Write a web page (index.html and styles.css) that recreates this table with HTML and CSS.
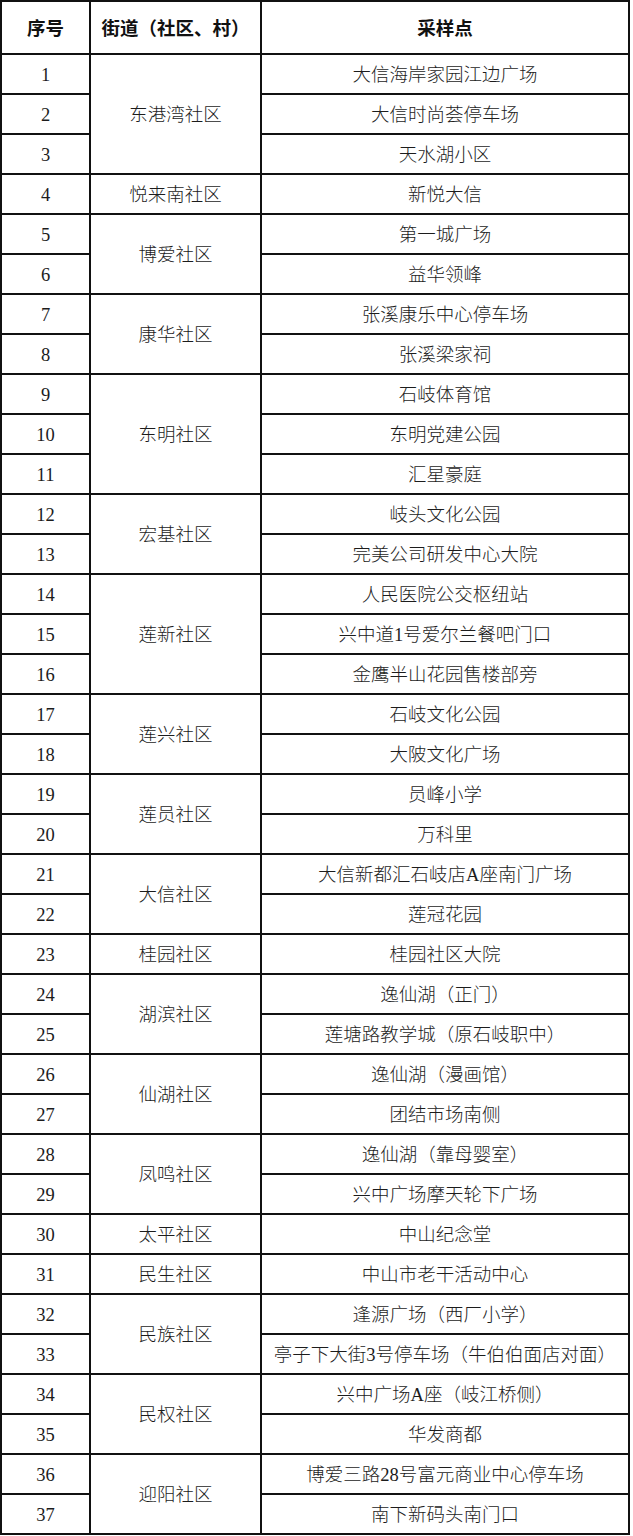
FILE: index.html
```html
<!DOCTYPE html>
<html lang="zh">
<head>
<meta charset="utf-8">
<title>采样点</title>
<link rel="stylesheet" href="styles.css">
</head>
<body>
<table class="grid">
<colgroup><col class="c1"><col class="c2"><col class="c3"></colgroup>
<thead>
<tr class="head"><th>序号</th><th>街道（社区、村）</th><th>采样点</th></tr>
</thead>
<tbody>
<tr><td>1</td><td rowspan="3">东港湾社区</td><td>大信海岸家园江边广场</td></tr>
<tr><td>2</td><td>大信时尚荟停车场</td></tr>
<tr><td>3</td><td>天水湖小区</td></tr>
<tr><td>4</td><td>悦来南社区</td><td>新悦大信</td></tr>
<tr><td>5</td><td rowspan="2">博爱社区</td><td>第一城广场</td></tr>
<tr><td>6</td><td>益华领峰</td></tr>
<tr><td>7</td><td rowspan="2">康华社区</td><td>张溪康乐中心停车场</td></tr>
<tr><td>8</td><td>张溪梁家祠</td></tr>
<tr><td>9</td><td rowspan="3">东明社区</td><td>石岐体育馆</td></tr>
<tr><td>10</td><td>东明党建公园</td></tr>
<tr><td>11</td><td>汇星豪庭</td></tr>
<tr><td>12</td><td rowspan="2">宏基社区</td><td>岐头文化公园</td></tr>
<tr><td>13</td><td>完美公司研发中心大院</td></tr>
<tr><td>14</td><td rowspan="3">莲新社区</td><td>人民医院公交枢纽站</td></tr>
<tr><td>15</td><td>兴中道1号爱尔兰餐吧门口</td></tr>
<tr><td>16</td><td>金鹰半山花园售楼部旁</td></tr>
<tr><td>17</td><td rowspan="2">莲兴社区</td><td>石岐文化公园</td></tr>
<tr><td>18</td><td>大陂文化广场</td></tr>
<tr><td>19</td><td rowspan="2">莲员社区</td><td>员峰小学</td></tr>
<tr><td>20</td><td>万科里</td></tr>
<tr><td>21</td><td rowspan="2">大信社区</td><td>大信新都汇石岐店A座南门广场</td></tr>
<tr><td>22</td><td>莲冠花园</td></tr>
<tr><td>23</td><td>桂园社区</td><td>桂园社区大院</td></tr>
<tr><td>24</td><td rowspan="2">湖滨社区</td><td>逸仙湖（正门）</td></tr>
<tr><td>25</td><td>莲塘路教学城（原石岐职中）</td></tr>
<tr><td>26</td><td rowspan="2">仙湖社区</td><td>逸仙湖（漫画馆）</td></tr>
<tr><td>27</td><td>团结市场南侧</td></tr>
<tr><td>28</td><td rowspan="2">凤鸣社区</td><td>逸仙湖（靠母婴室）</td></tr>
<tr><td>29</td><td>兴中广场摩天轮下广场</td></tr>
<tr><td>30</td><td>太平社区</td><td>中山纪念堂</td></tr>
<tr><td>31</td><td>民生社区</td><td>中山市老干活动中心</td></tr>
<tr><td>32</td><td rowspan="2">民族社区</td><td>逢源广场（西厂小学）</td></tr>
<tr><td>33</td><td>亭子下大街3号停车场（牛伯伯面店对面）</td></tr>
<tr><td>34</td><td rowspan="2">民权社区</td><td>兴中广场A座（岐江桥侧）</td></tr>
<tr><td>35</td><td>华发商都</td></tr>
<tr><td>36</td><td rowspan="2">迎阳社区</td><td>博爱三路28号富元商业中心停车场</td></tr>
<tr><td>37</td><td>南下新码头南门口</td></tr>
</tbody>
</table>
</body>
</html>
```

FILE: styles.css
```css
html, body {
  margin: 0;
  padding: 0;
  background: #ffffff;
}

.grid {
  table-layout: fixed;
  width: 630px;
  border-collapse: separate;
  border-spacing: 0;
  border-top: 2px solid #111;
  border-left: 2px solid #111;
  font-family: "Liberation Serif", "Noto Sans CJK SC", serif;
  font-size: 18.5px;
  font-weight: 300;
  color: #1c1c1c;
}

.c1 { width: 89px; }
.c2 { width: 171px; }
.c3 { width: 368px; }

.grid th,
.grid td {
  padding: 3px 0 0;
  text-align: center;
  vertical-align: middle;
  border-right: 2px solid #111;
  border-bottom: 2px solid #111;
  white-space: nowrap;
  line-height: 1;
}

.grid th {
  font-weight: 700;
  color: #111;
}

.head { height: 53px; }
.grid tbody tr { height: 40px; }
```
